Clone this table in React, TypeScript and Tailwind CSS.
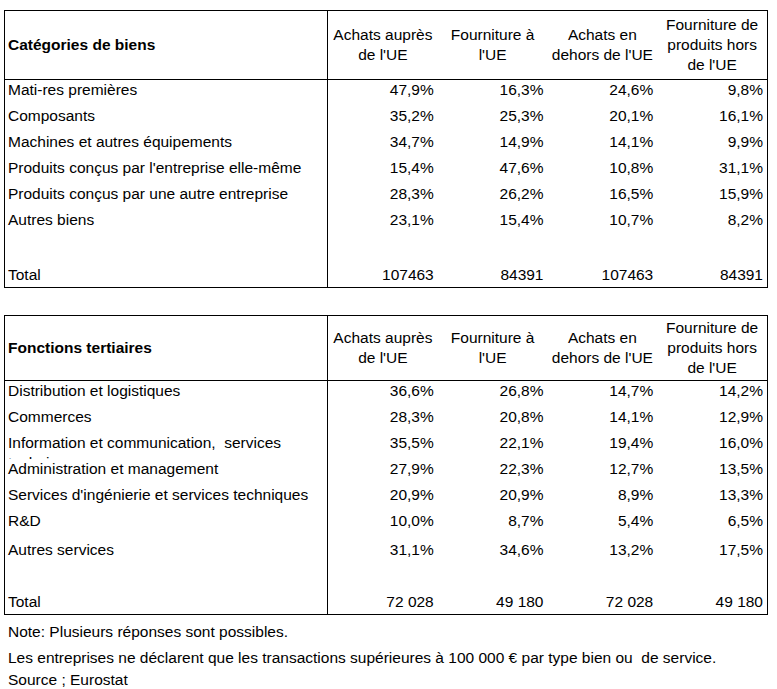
import React from 'react';

type Row = { label: string; values: string[]; h: string; pt?: string };

const headers: string[][] = [
  ['Achats auprès', "de l'UE"],
  ['Fourniture à', "l'UE"],
  ['Achats en', "dehors de l'UE"],
  ['Fourniture de', 'produits hors', "de l'UE"],
];

const biens: Row[] = [
  { label: 'Mati-res premières', values: ['47,9%', '16,3%', '24,6%', '9,8%'], h: 'h-[26px]' },
  { label: 'Composants', values: ['35,2%', '25,3%', '20,1%', '16,1%'], h: 'h-[26px]' },
  { label: 'Machines et autres équipements', values: ['34,7%', '14,9%', '14,1%', '9,9%'], h: 'h-[26px]' },
  { label: "Produits conçus par l'entreprise elle-même", values: ['15,4%', '47,6%', '10,8%', '31,1%'], h: 'h-[26px]' },
  { label: 'Produits conçus par une autre entreprise', values: ['28,3%', '26,2%', '16,5%', '15,9%'], h: 'h-[26px]' },
  { label: 'Autres biens', values: ['23,1%', '15,4%', '10,7%', '8,2%'], h: 'h-[26px]' },
  { label: '', values: ['', '', '', ''], h: 'h-[26px]' },
  { label: 'Total', values: ['107463', '84391', '107463', '84391'], h: 'h-[25px]', pt: 'pt-[3px]' },
];

const services: Row[] = [
  { label: 'Distribution et logistiques', values: ['36,6%', '26,8%', '14,7%', '14,2%'], h: 'h-[26px]' },
  { label: 'Commerces', values: ['28,3%', '20,8%', '14,1%', '12,9%'], h: 'h-[26px]' },
  { label: 'Information et communication,  services techniques', values: ['35,5%', '22,1%', '19,4%', '16,0%'], h: 'h-[26px]' },
  { label: 'Administration et management', values: ['27,9%', '22,3%', '12,7%', '13,5%'], h: 'h-[26px]' },
  { label: "Services d'ingénierie et services techniques", values: ['20,9%', '20,9%', '8,9%', '13,3%'], h: 'h-[26px]' },
  { label: 'R&D', values: ['10,0%', '8,7%', '5,4%', '6,5%'], h: 'h-[26px]' },
  { label: 'Autres services', values: ['31,1%', '34,6%', '13,2%', '17,5%'], h: 'h-[29px]', pt: 'pt-[3px]' },
  { label: '', values: ['', '', '', ''], h: 'h-[26px]' },
  { label: 'Total', values: ['72 028', '49 180', '72 028', '49 180'], h: 'h-[22px]' },
];

function Table({ title, rows, headH, className }: { title: string; rows: Row[]; headH: string; className?: string }) {
  return (
    <div className={`ml-[4px] w-[764px] border border-black ${className ?? ''}`}>
      {/* header */}
      <div className={`flex border-b border-black ${headH}`}>
        <div className="w-[323px] shrink-0 border-r border-black flex items-center pl-[3px] font-bold">
          {title}
        </div>
        {headers.map((lines, i) => (
          <div key={i} className="flex-1 flex flex-col items-center justify-center text-center">
            {lines.map((l) => (
              <span key={l} className="whitespace-nowrap">{l}</span>
            ))}
          </div>
        ))}
      </div>

      {rows.map((r, i) => (
        <div key={i} className={`flex ${r.h}`}>
          <div className={`w-[323px] shrink-0 border-r border-black pl-[3px] overflow-hidden whitespace-pre-wrap ${r.pt ?? ''}`}>
            {r.label}
          </div>
          {r.values.map((v, j) => (
            <div key={j} className={`flex-1 text-right pr-[4px] whitespace-nowrap ${r.pt ?? ''}`}>
              {v}
            </div>
          ))}
        </div>
      ))}
    </div>
  );
}

export default function App() {
  return (
    <div className="w-[777px] h-[689px] bg-white text-black text-[15.5px] leading-[20px] pt-[10px] font-['Liberation_Sans',Arial,sans-serif] overflow-hidden">
      <Table title="Catégories de biens" rows={biens} headH="h-[69px]" />
      <Table title="Fonctions tertiaires" rows={services} headH="h-[65px]" className="mt-[27px]" />

      <p className="pl-[8px] mt-[7px]">Note: Plusieurs réponses sont possibles.</p>
      <p className="pl-[8px] mt-[6px] whitespace-pre">
        Les entreprises ne déclarent que les transactions supérieures à 100 000 € par type bien ou  de service.
      </p>
      <p className="pl-[8px] mt-[2px]">Source ; Eurostat</p>
    </div>
  );
}
